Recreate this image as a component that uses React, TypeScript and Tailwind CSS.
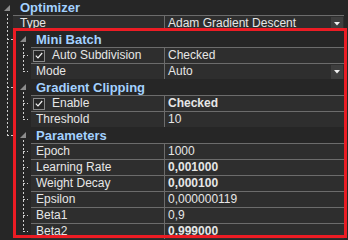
import React from "react"

type Item = {
  label: string
  value: string
  bold?: boolean
  check?: boolean
  dropdown?: boolean
}

type Group = {
  title: string
  items: Item[]
}

const groups: Group[] = [
  {
    title: "Mini Batch",
    items: [
      { label: "Auto Subdivision", value: "Checked", check: true },
      { label: "Mode", value: "Auto", dropdown: true },
    ],
  },
  {
    title: "Gradient Clipping",
    items: [
      { label: "Enable", value: "Checked", check: true, bold: true },
      { label: "Threshold", value: "10" },
    ],
  },
  {
    title: "Parameters",
    items: [
      { label: "Epoch", value: "1000" },
      { label: "Learning Rate", value: "0,001000", bold: true },
      { label: "Weight Decay", value: "0,000100", bold: true },
      { label: "Epsilon", value: "0,000000119" },
      { label: "Beta1", value: "0,9" },
      { label: "Beta2", value: "0,999000", bold: true },
    ],
  },
]

function Expander() {
  return (
    <svg width="6" height="6" viewBox="0 0 6 6" className="shrink-0">
      <polygon points="6,0 6,6 0,6" fill="#8c8c8c" />
    </svg>
  )
}

function DropButton() {
  return (
    <div className="mr-[1px] flex h-[14px] w-[12px] items-center justify-center bg-[#3e3e3e]">
      <svg width="6" height="4" viewBox="0 0 6 4">
        <polygon points="0,0 6,0 3,3.5" fill="#f0f0f0" />
      </svg>
    </div>
  )
}

function CheckBox() {
  return (
    <div className="flex h-[12px] w-[12px] shrink-0 items-center justify-center border border-[#8a8a8a] bg-[#262626]">
      <svg width="8" height="7" viewBox="0 0 8 7">
        <path d="M0.8 3.6 L3 5.8 L7.2 1" fill="none" stroke="#f2f2f2" strokeWidth="1.2" />
      </svg>
    </div>
  )
}

function Row({ item, nested }: { item: Item; nested: boolean }) {
  return (
    <div className="flex h-4">
      <div className={nested ? "w-[31px] shrink-0" : "w-[13px] shrink-0"} />
      <div
        className={
          "flex h-4 shrink-0 items-center border-t border-[#6c6c6c] bg-[#2e2e2e] " +
          (nested ? "w-[133px] " : "w-[151px] ") +
          (item.check ? "pl-[2px]" : nested ? "pl-[5px]" : "pl-[7px]")
        }
      >
        {item.check && <CheckBox />}
        <span className={"leading-[15px] text-[#e6e6e6] " + (item.check ? "ml-[7px]" : "")}>
          {item.label}
        </span>
      </div>
      <div className="flex h-4 flex-1 items-center border-t border-l border-[#6c6c6c] bg-[#2e2e2e] pl-[3px]">
        <span className={"flex-1 leading-[15px] text-[#e6e6e6] " + (item.bold ? "font-bold" : "")}>
          {item.value}
        </span>
        {item.dropdown && <DropButton />}
      </div>
      <div className="w-[4px] shrink-0" />
    </div>
  )
}

function TreeLines() {
  const dash = { stroke: "#cfcfcf", strokeWidth: 1, strokeDasharray: "2 2" }
  const inner = (from: number, rows: number[]) => (
    <g>
      <line x1="23.5" y1={from} x2="23.5" y2={rows[rows.length - 1] + 0.5} {...dash} />
      {rows.map((y) => (
        <line key={y} x1="23" y1={y + 0.5} x2="28" y2={y + 0.5} {...dash} />
      ))}
    </g>
  )
  return (
    <svg className="pointer-events-none absolute top-0 left-0" width="31" height="240">
      <line x1="7.5" y1="14" x2="7.5" y2="135.5" {...dash} />
      <line x1="7" y1="39.5" x2="13" y2="39.5" {...dash} />
      <line x1="7" y1="87.5" x2="13" y2="87.5" {...dash} />
      <line x1="7" y1="135.5" x2="13" y2="135.5" {...dash} />
      {inner(44, [55, 71])}
      {inner(92, [103, 119])}
      {inner(140, [151, 167, 183, 199, 215, 231])}
    </svg>
  )
}

export default function App() {
  return (
    <div className="relative h-[240px] w-[348px] overflow-hidden bg-[#262626] font-['Liberation_Sans',Arial,sans-serif] text-[12px]">
      <div className="flex h-[15px] items-center pl-[4px]">
        <Expander />
        <span className="ml-[10px] text-[13px] leading-[15px] font-bold text-[#a3d1ff]">Optimizer</span>
      </div>

      <Row item={{ label: "Type", value: "Adam Gradient Descent", dropdown: true }} nested={false} />

      {groups.map((g) => (
        <div key={g.title}>
          <div className="flex h-4 items-center pl-[20px]">
            <Expander />
            <span className="ml-[10px] text-[13px] leading-[15px] font-bold text-[#a3d1ff]">{g.title}</span>
          </div>
          {g.items.map((it) => (
            <Row key={it.label} item={it} nested />
          ))}
        </div>
      ))}

      <TreeLines />

      <div className="pointer-events-none absolute top-[28px] left-[13px] h-[210px] w-[334px] border-[3px] border-[#ec1c24]" />
    </div>
  )
}
